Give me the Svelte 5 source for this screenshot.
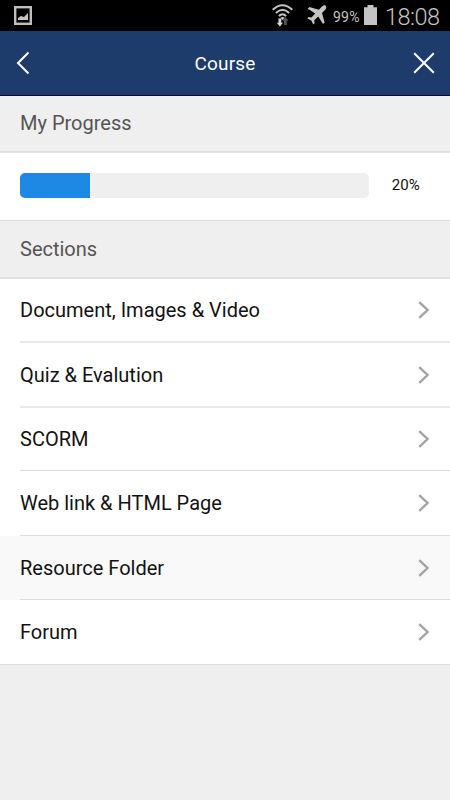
<script>
  const progress = 20;
  const sections = [
    { label: 'Document, Images & Video', height: 64, soft: true },
    { label: 'Quiz & Evalution', height: 65, soft: true },
    { label: 'SCORM', height: 63 },
    { label: 'Web link & HTML Page', height: 65 },
    { label: 'Resource Folder', height: 64, active: true },
    { label: 'Forum', height: 65, last: true }
  ];
</script>

<div class="screen">
  <div class="status">
    <svg class="picture" width="18" height="19" viewBox="0 0 18 19">
      <rect x="1.2" y="1.2" width="15.6" height="16.6" fill="none" stroke="#bfbfbf" stroke-width="2.4" />
      <path d="M4 14V12l3-2 3 1 4-4v7z" fill="#c4c4c4" />
    </svg>
    <div class="indicators">
      <svg class="wifi" width="21" height="24" viewBox="0 0 21 24">
        <g fill="none" stroke="#c4c4c4" stroke-width="1.9">
          <path d="M.7 5.8Q10.5-3.4 20.3 5.8" />
          <path d="M3.9 9Q10.5 2.6 17.1 9" />
          <path d="M6.9 12Q10.5 8.4 14.1 12" />
        </g>
        <path d="M8.4 13.8Q10.5 12 12.6 13.8L10.5 16z" fill="#c4c4c4" />
        <path d="M6.500 14.500h2.800v4.200H11L7.900 22.500 4.800 18.700h1.700z" fill="#d8d8d8" />
        <path d="M12 21v-4.200h-1.700l3.100-3.800 3.100 3.800h-1.700V21z" fill="#555" />
      </svg>
      <svg class="plane" width="20" height="20" viewBox="0 0 20 20">
        <path d="M18.700.8c-1-.9-2.500-.5-3.500.5l-3.400 3.500L2.400 2 .8 3.700l7.400 4.700-3.700 4.100-3-.4L.3 13.400l4 2 2 4.100 1.300-1.200-.4-3.100 4-3.600 4.800 7.400 1.600-1.600-2.600-9.300 3.200-3.300c1-1 1.500-2.600.5-3.600z" fill="#c4c4c4" />
      </svg>
      <span class="charge">99%</span>
      <svg class="battery" width="13" height="20" viewBox="0 0 13 20">
        <path d="M3.500 0h6v2.200H13V20H0V2.200h3.500z" fill="#c4c4c4" />
      </svg>
      <span class="clock">18:08</span>
    </div>
  </div>

  <header>
    <svg width="14" height="24" viewBox="0 0 14 24" fill="none" stroke="#fff" stroke-width="2">
      <path d="M12.500 1.500 2 12l10.500 10.500" />
    </svg>
    <h1>Course</h1>
    <svg width="22" height="22" viewBox="0 0 22 22" fill="none" stroke="#fff" stroke-width="2">
      <path d="M1.200 1.200 20.800 20.800M20.800 1.200 1.200 20.800" />
    </svg>
  </header>

  <h2 class="first"><span>My Progress</span></h2>
  <div class="progress">
    <div class="track"><div class="fill" style="width: {progress}%"></div></div>
    <span>{progress}%</span>
  </div>
  <h2><span>Sections</span></h2>

  <ul>
    {#each sections as s}
      <li class:active={s.active} class:last={s.last} class:soft={s.soft} style="height: {s.height}px">
        <div class="row">
          <span>{s.label}</span>
          <svg width="12" height="18" viewBox="0 0 12 18" fill="none" stroke="#a3a3a3" stroke-width="2.4">
            <path d="M1.300 1.200 9.500 9l-8.200 7.800" />
          </svg>
        </div>
      </li>
    {/each}
  </ul>
</div>

<style>
  :global(body) { margin: 0; }
  .screen {
    width: 450px; height: 800px; overflow: hidden; background: #efefef;
    font-family: Roboto, sans-serif; font-weight: 400; color: #121212;
  }
  .status {
    height: 31px; background: #000; color: #c4c4c4; box-sizing: border-box;
    display: flex; justify-content: space-between; align-items: flex-start;
    padding: 0 11px 0 14px;
  }
  .picture { margin-top: 6px; }
  .indicators { display: flex; align-items: flex-start; }
  .wifi { margin: 4px 14px 0 0; }
  .plane { margin: 5px 6px 0 0; }
  .charge { font-size: 14px; line-height: 16px; margin: 9px 4px 0 0; width: 27px; letter-spacing: .2px; }
  .battery { margin: 5px 8px 0 0; }
  .clock { font-size: 23.5px; font-weight: 350; line-height: 26px; margin-top: 4px; width: 54px; white-space: nowrap; letter-spacing: -.5px; }
  header {
    height: 65px; background: #1d3b6b; border-bottom: 1px solid #030347; box-sizing: border-box;
    display: flex; align-items: center; justify-content: space-between; padding: 0 15px 0 16px;
  }
  h1 { margin: 0 0 0 7px; font-size: 19px; font-weight: 400; color: #fff; letter-spacing: .2px; }
  h2 {
    margin: 0; height: 58px; box-sizing: border-box; border-bottom: 2px solid #e2e2e2;
    font-size: 20px; font-weight: 400; color: #555; padding-left: 20px;
    display: flex; align-items: center;
  }
  h2.first { height: 57px; padding-bottom: 1px; }
  .progress {
    height: 68px; box-sizing: border-box; background: #fff; border-bottom: 1px solid #d9dcde;
    display: flex; align-items: center; padding: 0 30px 3px 20px; justify-content: space-between;
  }
  .progress span { font-size: 15px; letter-spacing: .15px; }
  .track { width: 349px; height: 25px; border-radius: 5px; background: #efefef; overflow: hidden; }
  .fill { height: 100%; background: #1e88e5; }
  ul { list-style: none; margin: 0; padding: 0; }
  li { box-sizing: border-box; background: #fff; padding-left: 20px; }
  .row {
    height: 100%; box-sizing: border-box; border-bottom: 1px solid #d9dde0; padding-right: 20px;
    display: flex; align-items: center; justify-content: space-between; font-size: 20px;
  }
  .soft .row { border-bottom: 2px solid #e6e8ea; }
  .active { background: #f9f9f9; }
  .last { border-bottom: 1px solid #d9dde0; }
  .last .row { border: 0; }
</style>
